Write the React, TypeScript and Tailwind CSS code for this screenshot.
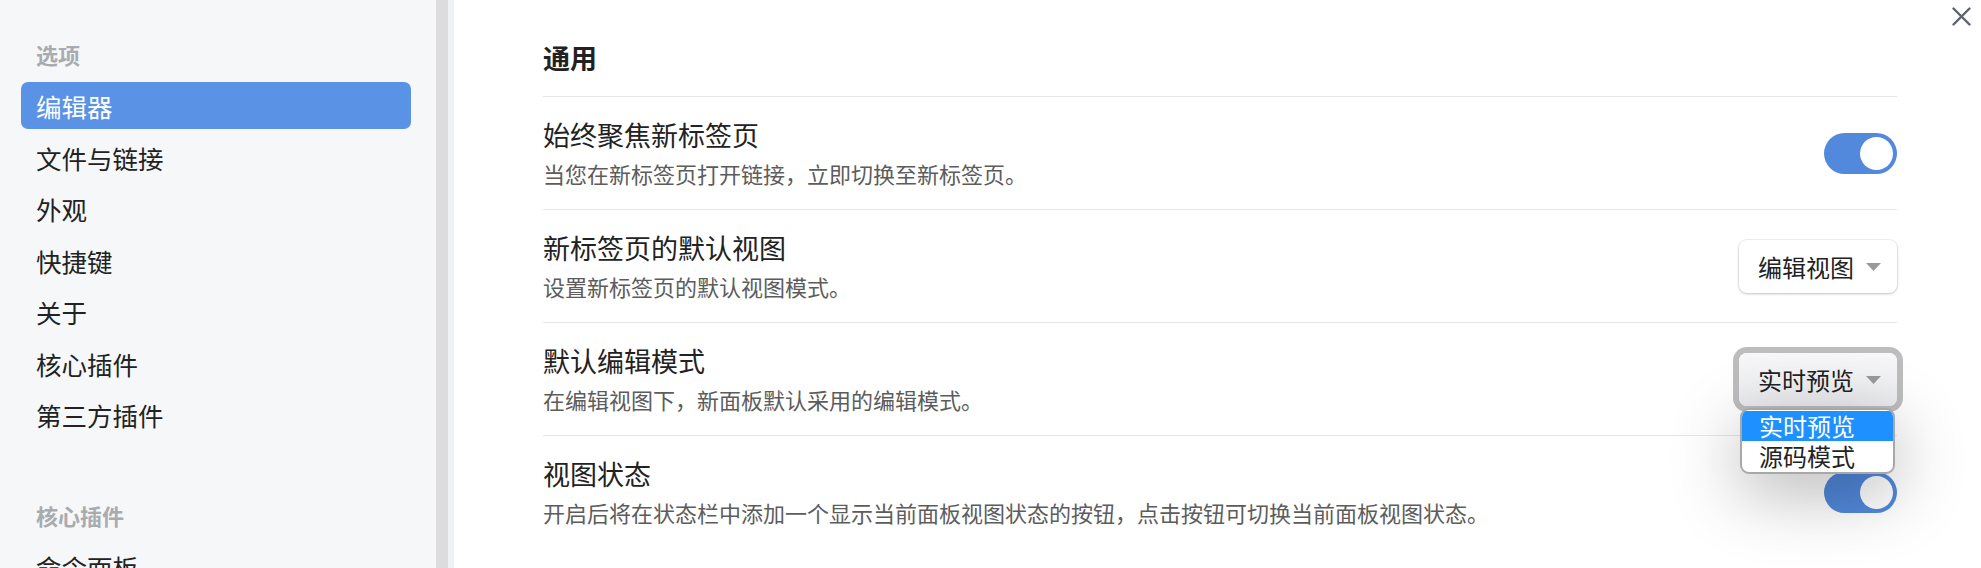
import React from "react";

const navMain = ["编辑器", "文件与链接", "外观", "快捷键", "关于", "核心插件", "第三方插件"];

function Toggle() {
  return (
    <div className="flex h-[41px] w-[73px] shrink-0 items-center justify-end rounded-full bg-[#5289dc] pr-[4px]">
      <div className="h-[33px] w-[33px] rounded-full bg-white" />
    </div>
  );
}

function Caret() {
  return (
    <svg width="15" height="8" viewBox="0 0 15 8" className="shrink-0">
      <path d="M0 0 L15 0 L7.5 8 Z" fill="#9a9a9a" />
    </svg>
  );
}

function Dropdown({ label }: { label: string }) {
  return (
    <div className="flex h-[53px] w-[158px] shrink-0 items-center justify-between rounded-[8px] bg-white pl-[19px] pr-[16px] text-[24px] leading-[30px] text-[#222] shadow-[0_1px_3px_rgba(0,0,0,0.2),0_0_0_1px_rgba(0,0,0,0.05)]">
      <span>{label}</span>
      <Caret />
    </div>
  );
}

function FocusedDropdown({ label }: { label: string }) {
  return (
    <div className="relative shrink-0">
      <div className="flex h-[53px] w-[158px] items-center justify-between rounded-[8px] bg-gradient-to-b from-[#f7f7f9] to-[#ebecef] pl-[19px] pr-[16px] text-[24px] leading-[30px] text-[#222] shadow-[0_0_0_6px_#bdbdbd]">
        <span>{label}</span>
        <Caret />
      </div>
      <div className="absolute left-[1px] top-[55px] z-10 w-[155px] overflow-hidden rounded-[9px] border-2 border-[#a8a8a8] bg-white py-[1px] shadow-[0_18px_70px_rgba(0,0,0,0.3)]">
        <div className="h-[30px] bg-[#1e90ff] pl-[17px] text-[24px] leading-[30px] text-white">实时预览</div>
        <div className="h-[30px] pl-[17px] text-[24px] leading-[30px] text-[#222]">源码模式</div>
      </div>
    </div>
  );
}

function Row({
  title,
  desc,
  control,
}: {
  title: string;
  desc: string;
  control: React.ReactNode;
}) {
  return (
    <div className="flex items-center border-t border-[#e6e6e6] pb-[19px] pt-[20px]">
      <div className="flex min-w-0 flex-1 flex-col gap-[4px]">
        <div className="h-[36px] whitespace-nowrap text-[27px] leading-[36px] text-[#222]">{title}</div>
        <div className="h-[33px] whitespace-nowrap text-[22px] leading-[33px] text-[#5c5c5c]">{desc}</div>
      </div>
      {control}
    </div>
  );
}

export default function App() {
  return (
    <div className="relative flex h-[568px] w-[1981px] overflow-hidden bg-white font-['Noto_Sans_CJK_SC','Noto_Sans',sans-serif]">
      {/* Sidebar */}
      <div className="flex w-[436px] shrink-0 flex-col bg-[#f6f7f9] pl-[21px] pr-[25px] pt-[38px]">
        <div className="mb-[11px] h-[33px] pl-[15px] text-[22px] font-bold leading-[33px] text-[#a8abaf]">选项</div>
        <div className="flex flex-col gap-[4.5px]">
          {navMain.map((item, i) => (
            <div
              key={item}
              className={
                i === 0
                  ? "h-[47px] rounded-[7px] bg-[#5a93e6] pl-[15px] text-[25.5px] leading-[47px] text-white"
                  : "h-[47px] rounded-[7px] pl-[15px] text-[25.5px] leading-[47px] text-[#222]"
              }
            >
              {item}
            </div>
          ))}
        </div>
        <div className="mb-[11px] mt-[61px] h-[33px] pl-[15px] text-[22px] font-bold leading-[33px] text-[#a8abaf]">核心插件</div>
        <div className="h-[47px] shrink-0 rounded-[7px] pl-[15px] text-[25.5px] leading-[47px] text-[#222]">命令面板</div>
      </div>

      {/* Scrollbar strip */}
      <div className="w-[12px] shrink-0 bg-[#dcdcde]" />
      <div className="w-[6px] shrink-0 bg-[#f0f1f3]" />

      {/* Main */}
      <div className="flex min-w-0 flex-1 flex-col pl-[89px] pr-[84px] pt-[40px]">
        <div className="mb-[20px] h-[36px] text-[27px] font-bold leading-[36px] text-[#222]">通用</div>
        <Row
          title="始终聚焦新标签页"
          desc="当您在新标签页打开链接，立即切换至新标签页。"
          control={<Toggle />}
        />
        <Row
          title="新标签页的默认视图"
          desc="设置新标签页的默认视图模式。"
          control={<Dropdown label="编辑视图" />}
        />
        <Row
          title="默认编辑模式"
          desc="在编辑视图下，新面板默认采用的编辑模式。"
          control={<FocusedDropdown label="实时预览" />}
        />
        <Row
          title="视图状态"
          desc="开启后将在状态栏中添加一个显示当前面板视图状态的按钮，点击按钮可切换当前面板视图状态。"
          control={<Toggle />}
        />
      </div>

      {/* Close button */}
      <div className="absolute right-[10px] top-[7px] h-[19px] w-[19px]">
        <svg width="19" height="19" viewBox="0 0 19 19">
          <path d="M1.5 1.5 L17.5 17.5 M17.5 1.5 L1.5 17.5" stroke="#5c6470" strokeWidth="2.4" strokeLinecap="round" />
        </svg>
      </div>
    </div>
  );
}
